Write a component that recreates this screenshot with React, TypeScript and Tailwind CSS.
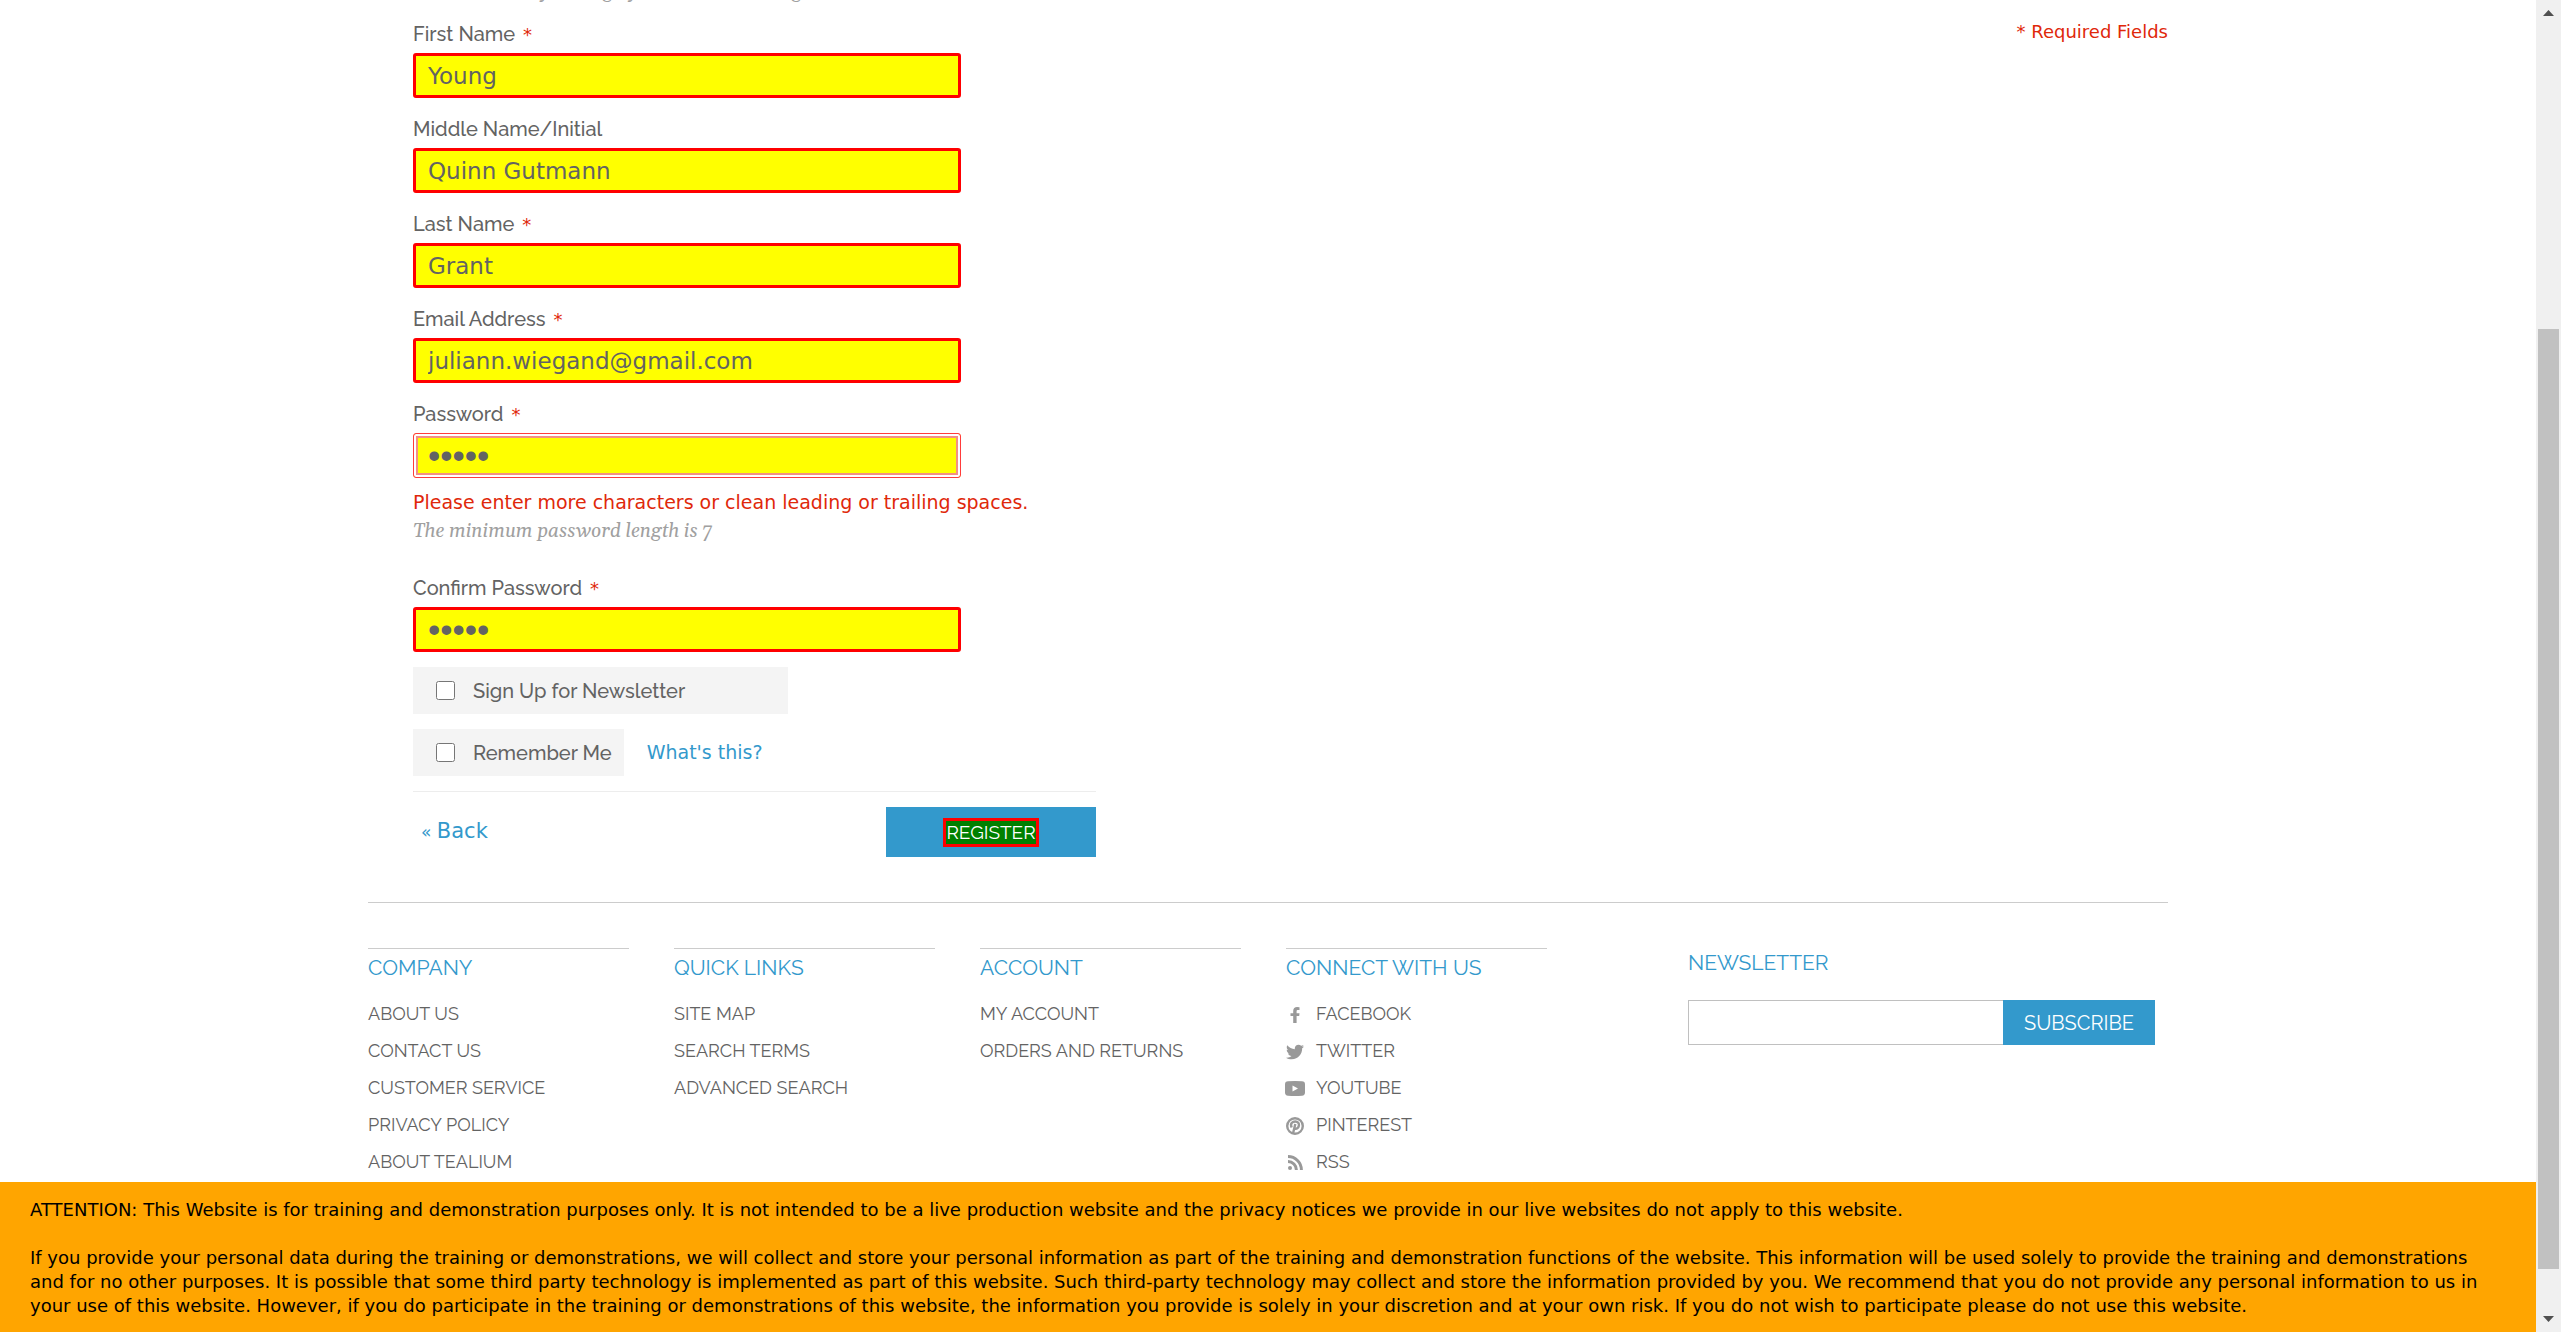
import React from "react";
import { FaTwitter } from "react-icons/fa";

const RALEWAY = "font-['Raleway','Lato',sans-serif]";
const SERIF = "font-['Gelasio','Liberation_Serif',serif] italic text-[19px] text-[#a0a0a0]";

function Star() {
  return (
    <span className="ml-2 font-['DejaVu_Sans',sans-serif] text-[18px] leading-none font-normal text-[#df280a]">*</span>
  );
}

type FieldProps = {
  id: string;
  label: string;
  value: string;
  type?: string;
  required?: boolean;
  focused?: boolean;
};

function Field({ id, label, value, type = "text", required = true, focused = false }: FieldProps) {
  const frame = focused
    ? "border border-[#ff3b3b] px-[14px] shadow-[inset_0_0_0_2px_#fff,inset_0_0_0_4px_#f28f84]"
    : "border-[3px] border-[#ff0000] px-3";
  const font = type === "password" ? "font-['Liberation_Sans',sans-serif] text-[35px] leading-none" : "text-[23px]";
  return (
    <div>
      <label htmlFor={id} className={`mb-[5px] block h-7 text-[20px] leading-7 font-medium ${RALEWAY}`}>
        {label}
        {required && <Star />}
      </label>
      <input
        id={id}
        type={type}
        defaultValue={value}
        className={`block h-[45px] w-full max-w-[548px] rounded-[3px] bg-[#ffff00] text-[#636363] outline-none ${font} ${frame}`}
      />
    </div>
  );
}

function Check({ id, label, wide = false }: { id: string; label: string; wide?: boolean }) {
  return (
    <div className={`flex h-[47px] items-center bg-[#f4f4f4] pr-3 pl-[23px] ${wide ? "w-[375px]" : ""}`}>
      <input id={id} type="checkbox" className="size-[19px]" />
      <label htmlFor={id} className={`pl-[18px] text-[20px] font-medium ${RALEWAY}`}>
        {label}
      </label>
    </div>
  );
}

function Facebook() {
  return (
    <svg viewBox="0 0 10 16" className="h-4 w-[10px]">
      <path
        d="M9.500.200v2.800H7.900c-.9 0-1.300.4-1.300 1.300V6.200h2.900l-.3 2.900H6.600V16H3.200V9.100H.5V6.200h2.700V4C3.200 1.500 4.700.1 7.100.1Z"
        fill="currentColor"
      />
    </svg>
  );
}

function Youtube() {
  return (
    <svg viewBox="0 0 20 15" className="w-5 shrink-0">
      <path
        fillRule="evenodd"
        d="M3 .3Q10-.2 17 .3Q20 .4 20 3.500v8Q20 14.600 17 14.700Q10 15.200 3 14.700Q0 14.600 0 11.500v-8Q0 .4 3 .3ZM7.500 4.500v6l5.500-3Z"
        fill="currentColor"
      />
    </svg>
  );
}

function Pinterest() {
  return (
    <svg viewBox="0 0 18 18" className="w-[18px]" fill="none" stroke="currentColor" strokeWidth="2.400">
      <circle cx="9" cy="9" r="7.800" />
      <path d="M5.700 10.500C3.700 6.500 6.500 4.500 9.300 4.500C12 4.500 13.300 6.300 12.900 8.500C12.500 11.500 10 12.400 8.500 11M9.300 7L7 16.500" />
    </svg>
  );
}

function Rss() {
  return (
    <svg viewBox="0 0 15 15" className="w-[15px]" fill="none" stroke="currentColor" strokeWidth="3">
      <circle cx="2" cy="13" r="2" fill="currentColor" stroke="none" />
      <path d="M0 6.600A8.400 8.400 0 0 1 8.400 15M0 1.600A13.400 13.400 0 0 1 13.400 15" />
    </svg>
  );
}

type Item = { label: string; icon?: React.ReactNode };
const columns: { title: string; items: Item[] }[] = [
  {
    title: "COMPANY",
    items: [
      { label: "ABOUT US" },
      { label: "CONTACT US" },
      { label: "CUSTOMER SERVICE" },
      { label: "PRIVACY POLICY" },
      { label: "ABOUT TEALIUM" },
    ],
  },
  { title: "QUICK LINKS", items: [{ label: "SITE MAP" }, { label: "SEARCH TERMS" }, { label: "ADVANCED SEARCH" }] },
  { title: "ACCOUNT", items: [{ label: "MY ACCOUNT" }, { label: "ORDERS AND RETURNS" }] },
  {
    title: "CONNECT WITH US",
    items: [
      { label: "FACEBOOK", icon: <Facebook /> },
      { label: "TWITTER", icon: <FaTwitter size={18} /> },
      { label: "YOUTUBE", icon: <Youtube /> },
      { label: "PINTEREST", icon: <Pinterest /> },
      { label: "RSS", icon: <Rss /> },
    ],
  },
];

function Footer() {
  return (
    <footer className={`mt-[45px] flex border-t border-[#cccccc] ${RALEWAY}`}>
      {columns.map((c) => (
        <section key={c.title} className="mt-[45px] mr-[45px] w-[261px] border-t border-[#cccccc]">
          <h2 className="text-[21px] leading-[37px] text-[#3399cc]">{c.title}</h2>
          <ul className="mt-[9px]">
            {c.items.map((it) => (
              <li key={it.label}>
                <a href="#" className="flex items-center text-[18px] leading-[37px]">
                  {it.icon && (
                    <span className="mt-0.5 mr-3 flex w-[18px] justify-center text-[#999999]">{it.icon}</span>
                  )}
                  {it.label}
                </a>
              </li>
            ))}
          </ul>
        </section>
      ))}
      <section className="mt-[41px] ml-auto w-[480px]">
        <label htmlFor="newsletter" className="block text-[21px] leading-[37px] text-[#3399cc]">
          NEWSLETTER
        </label>
        <div className="mt-[19px] mr-[13px] flex">
          <input
            id="newsletter"
            type="email"
            className="h-[45px] min-w-0 flex-1 border border-r-0 border-[#c0c0c0] px-3 text-[20px] outline-none"
          />
          <button type="button" className="w-[152px] bg-[#3399cc] text-[20px] text-white">
            SUBSCRIBE
          </button>
        </div>
      </section>
    </footer>
  );
}

function Scrollbar() {
  return (
    <div className="flex w-[25px] shrink-0 flex-col items-center justify-between bg-[#f0f0f0] py-[10px]" aria-hidden="true">
      <svg viewBox="0 0 11 6" className="w-[11px]">
        <path d="M0 6 5.500 0 11 6Z" fill="#505050" />
      </svg>
      <div className="flex w-full flex-1 flex-col px-[2px]">
        <div className="flex-[313]" />
        <div className="flex-[939] bg-[#c1c1c1]" />
        <div className="flex-[47]" />
      </div>
      <svg viewBox="0 0 11 6" className="w-[11px]">
        <path d="M0 0 5.500 6 11 0Z" fill="#505050" />
      </svg>
    </div>
  );
}

export default function App() {
  return (
    <div className="flex h-screen overflow-hidden bg-white font-['DejaVu_Sans','Noto_Sans',sans-serif] text-[#636363]">
      <div className="flex min-w-0 flex-1 flex-col">
        <main className="min-h-0 flex-1 overflow-hidden">
          <div className="mx-auto max-w-[1800px]">
            <div className="flex justify-between">
              <form className="w-[728px] pl-[45px]" onSubmit={(e) => e.preventDefault()}>
                <p className={`-mt-5 mb-4 leading-6 ${SERIF}`}>Please note only testing by our team is testing</p>
                <div className="flex flex-col gap-[17px]">
                  <Field id="first" label="First Name" value="Young" />
                  <Field id="middle" label="Middle Name/Initial" value="Quinn Gutmann" required={false} />
                  <Field id="last" label="Last Name" value="Grant" />
                  <Field id="email" label="Email Address" value="juliann.wiegand@gmail.com" />
                  <Field id="password" label="Password" value="abcde" type="password" focused />
                </div>
                <p className="mt-[10px] text-[19px] leading-7 whitespace-nowrap text-[#df280a]">
                  Please enter more characters or clean leading or trailing spaces.
                </p>
                <p className={`mb-7 leading-[30px] ${SERIF}`}>The minimum password length is 7</p>
                <Field id="confirm" label="Confirm Password" value="abcde" type="password" />
                <div className="mt-[15px] flex flex-col gap-[15px]">
                  <Check id="signup" label="Sign Up for Newsletter" wide />
                  <div className="flex items-center gap-[23px]">
                    <Check id="remember" label="Remember Me" />
                    <a href="#" className="text-[19px] text-[#3399cc]">
                      What's this?
                    </a>
                  </div>
                  <div className="flex items-center justify-between border-t border-[#ededed] pt-[15px] pl-2 text-[#3399cc]">
                    <a href="#" className="text-[21px]">
                      <span className="text-[17px]">« </span>Back
                    </a>
                    <button
                      type="submit"
                      className={`flex h-[50px] w-[210px] items-center justify-center bg-[#3399cc] text-[19px] text-white ${RALEWAY}`}
                    >
                      <span className="border-[3px] border-[#ff0000] bg-[#008000] leading-[23px]">REGISTER</span>
                    </button>
                  </div>
                </div>
              </form>
              <p className="pt-5 text-[18px] leading-6 text-[#df280a]">* Required Fields</p>
            </div>
            <Footer />
          </div>
        </main>
        <aside className="bg-[#ffa500] px-[30px] pt-4 pb-[14px] text-[18px] leading-6 text-black">
          <p className="mb-6">
            ATTENTION: This Website is for training and demonstration purposes only. It is not intended to be a live production website and the privacy notices we provide in our live websites do not apply to this website.
          </p>
          <p>
            If you provide your personal data during the training or demonstrations, we will collect and store your personal information as part of the training and demonstration functions of the website. This information will be used solely to provide the training and demonstrations and for no other purposes. It is possible that some third party technology is implemented as part of this website. Such third-party technology may collect and store the information provided by you. We recommend that you do not provide any personal information to us in your use of this website. However, if you do participate in the training or demonstrations of this website, the information you provide is solely in your discretion and at your own risk. If you do not wish to participate please do not use this website.
          </p>
        </aside>
      </div>
      <Scrollbar />
    </div>
  );
}
